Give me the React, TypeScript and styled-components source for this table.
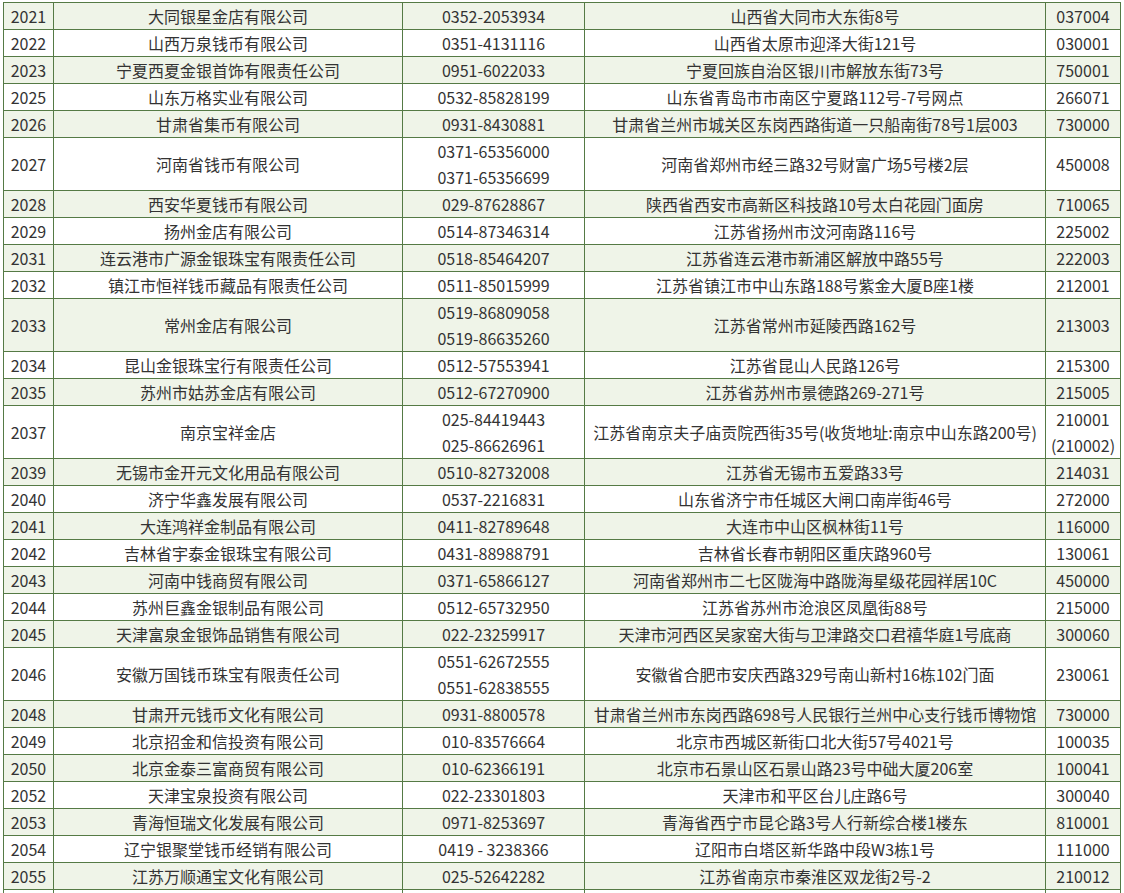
import styled, { createGlobalStyle } from 'styled-components';

type Dealer = {
  code: string;
  name: string;
  phones: string[];
  address: string;
  postcodes: string[];
};

const DEALERS: Dealer[] = [
  { code: '2021', name: '大同银星金店有限公司', phones: ['0352-2053934'], address: '山西省大同市大东街8号', postcodes: ['037004'] },
  { code: '2022', name: '山西万泉钱币有限公司', phones: ['0351-4131116'], address: '山西省太原市迎泽大街121号', postcodes: ['030001'] },
  { code: '2023', name: '宁夏西夏金银首饰有限责任公司', phones: ['0951-6022033'], address: '宁夏回族自治区银川市解放东街73号', postcodes: ['750001'] },
  { code: '2025', name: '山东万格实业有限公司', phones: ['0532-85828199'], address: '山东省青岛市市南区宁夏路112号-7号网点', postcodes: ['266071'] },
  { code: '2026', name: '甘肃省集币有限公司', phones: ['0931-8430881'], address: '甘肃省兰州市城关区东岗西路街道一只船南街78号1层003', postcodes: ['730000'] },
  { code: '2027', name: '河南省钱币有限公司', phones: ['0371-65356000', '0371-65356699'], address: '河南省郑州市经三路32号财富广场5号楼2层', postcodes: ['450008'] },
  { code: '2028', name: '西安华夏钱币有限公司', phones: ['029-87628867'], address: '陕西省西安市高新区科技路10号太白花园门面房', postcodes: ['710065'] },
  { code: '2029', name: '扬州金店有限公司', phones: ['0514-87346314'], address: '江苏省扬州市汶河南路116号', postcodes: ['225002'] },
  { code: '2031', name: '连云港市广源金银珠宝有限责任公司', phones: ['0518-85464207'], address: '江苏省连云港市新浦区解放中路55号', postcodes: ['222003'] },
  { code: '2032', name: '镇江市恒祥钱币藏品有限责任公司', phones: ['0511-85015999'], address: '江苏省镇江市中山东路188号紫金大厦B座1楼', postcodes: ['212001'] },
  { code: '2033', name: '常州金店有限公司', phones: ['0519-86809058', '0519-86635260'], address: '江苏省常州市延陵西路162号', postcodes: ['213003'] },
  { code: '2034', name: '昆山金银珠宝行有限责任公司', phones: ['0512-57553941'], address: '江苏省昆山人民路126号', postcodes: ['215300'] },
  { code: '2035', name: '苏州市姑苏金店有限公司', phones: ['0512-67270900'], address: '江苏省苏州市景德路269-271号', postcodes: ['215005'] },
  { code: '2037', name: '南京宝祥金店', phones: ['025-84419443', '025-86626961'], address: '江苏省南京夫子庙贡院西街35号(收货地址:南京中山东路200号)', postcodes: ['210001', '(210002)'] },
  { code: '2039', name: '无锡市金开元文化用品有限公司', phones: ['0510-82732008'], address: '江苏省无锡市五爱路33号', postcodes: ['214031'] },
  { code: '2040', name: '济宁华鑫发展有限公司', phones: ['0537-2216831'], address: '山东省济宁市任城区大闸口南岸街46号', postcodes: ['272000'] },
  { code: '2041', name: '大连鸿祥金制品有限公司', phones: ['0411-82789648'], address: '大连市中山区枫林街11号', postcodes: ['116000'] },
  { code: '2042', name: '吉林省宇泰金银珠宝有限公司', phones: ['0431-88988791'], address: '吉林省长春市朝阳区重庆路960号', postcodes: ['130061'] },
  { code: '2043', name: '河南中钱商贸有限公司', phones: ['0371-65866127'], address: '河南省郑州市二七区陇海中路陇海星级花园祥居10C', postcodes: ['450000'] },
  { code: '2044', name: '苏州巨鑫金银制品有限公司', phones: ['0512-65732950'], address: '江苏省苏州市沧浪区凤凰街88号', postcodes: ['215000'] },
  { code: '2045', name: '天津富泉金银饰品销售有限公司', phones: ['022-23259917'], address: '天津市河西区吴家窑大街与卫津路交口君禧华庭1号底商', postcodes: ['300060'] },
  { code: '2046', name: '安徽万国钱币珠宝有限责任公司', phones: ['0551-62672555', '0551-62838555'], address: '安徽省合肥市安庆西路329号南山新村16栋102门面', postcodes: ['230061'] },
  { code: '2048', name: '甘肃开元钱币文化有限公司', phones: ['0931-8800578'], address: '甘肃省兰州市东岗西路698号人民银行兰州中心支行钱币博物馆', postcodes: ['730000'] },
  { code: '2049', name: '北京招金和信投资有限公司', phones: ['010-83576664'], address: '北京市西城区新街口北大街57号4021号', postcodes: ['100035'] },
  { code: '2050', name: '北京金泰三富商贸有限公司', phones: ['010-62366191'], address: '北京市石景山区石景山路23号中础大厦206室', postcodes: ['100041'] },
  { code: '2052', name: '天津宝泉投资有限公司', phones: ['022-23301803'], address: '天津市和平区台儿庄路6号', postcodes: ['300040'] },
  { code: '2053', name: '青海恒瑞文化发展有限公司', phones: ['0971-8253697'], address: '青海省西宁市昆仑路3号人行新综合楼1楼东', postcodes: ['810001'] },
  { code: '2054', name: '辽宁银聚堂钱币经销有限公司', phones: ['0419 - 3238366'], address: '辽阳市白塔区新华路中段W3栋1号', postcodes: ['111000'] },
  { code: '2055', name: '江苏万顺通宝文化有限公司', phones: ['025-52642282'], address: '江苏省南京市秦淮区双龙街2号-2', postcodes: ['210012'] },
];

// Column widths measured border to border.
const COLUMN_WIDTHS = [50, 349, 182, 461, 75];

const GlobalStyle = createGlobalStyle`
  html, body {
    margin: 0;
    padding: 0;
    background: #ffffff;
    overflow: hidden;
  }
`;

function App() {
  return (
    <>
      <GlobalStyle />
      <Page>
        <DealerTable>
          <colgroup>
            {COLUMN_WIDTHS.map((width, index) => (
              <col key={index} style={{ width }} />
            ))}
          </colgroup>
          <tbody>
            {DEALERS.map((dealer, index) => (
              <Row key={dealer.code} $striped={index % 2 === 0}>
                <Cell>{dealer.code}</Cell>
                <Cell>{dealer.name}</Cell>
                <Cell>
                  {dealer.phones.map((phone) => (
                    <Line key={phone}>{phone}</Line>
                  ))}
                </Cell>
                <Cell>{dealer.address}</Cell>
                <Cell>
                  {dealer.postcodes.map((postcode) => (
                    <Line key={postcode}>{postcode}</Line>
                  ))}
                </Cell>
              </Row>
            ))}
            {/* The next row starts just past the bottom of the view. */}
            <Row $striped={false}>
              {COLUMN_WIDTHS.map((_, index) => (
                <Cell key={index} />
              ))}
            </Row>
          </tbody>
        </DealerTable>
      </Page>
    </>
  );
}

export default App;

const Page = styled.main`
  padding: 2px 0 0 3px;
  font-family: 'Noto Sans CJK SC', 'Noto Sans', sans-serif;
  color: #333333;
`;

const DealerTable = styled.table`
  width: 1118px;
  table-layout: fixed;
  border-collapse: collapse;
  font-size: 16px;
`;

const Row = styled.tr<{ $striped: boolean }>`
  background: ${({ $striped }) => ($striped ? '#eff4e8' : '#ffffff')};
`;

const Cell = styled.td`
  border: 1px solid #557a45;
  padding: 0;
  height: 26px;
  line-height: 26px;
  text-align: center;
  vertical-align: middle;
  white-space: nowrap;
  overflow: hidden;
`;

const Line = styled.div`
  height: 26px;
  line-height: 26px;
`;
